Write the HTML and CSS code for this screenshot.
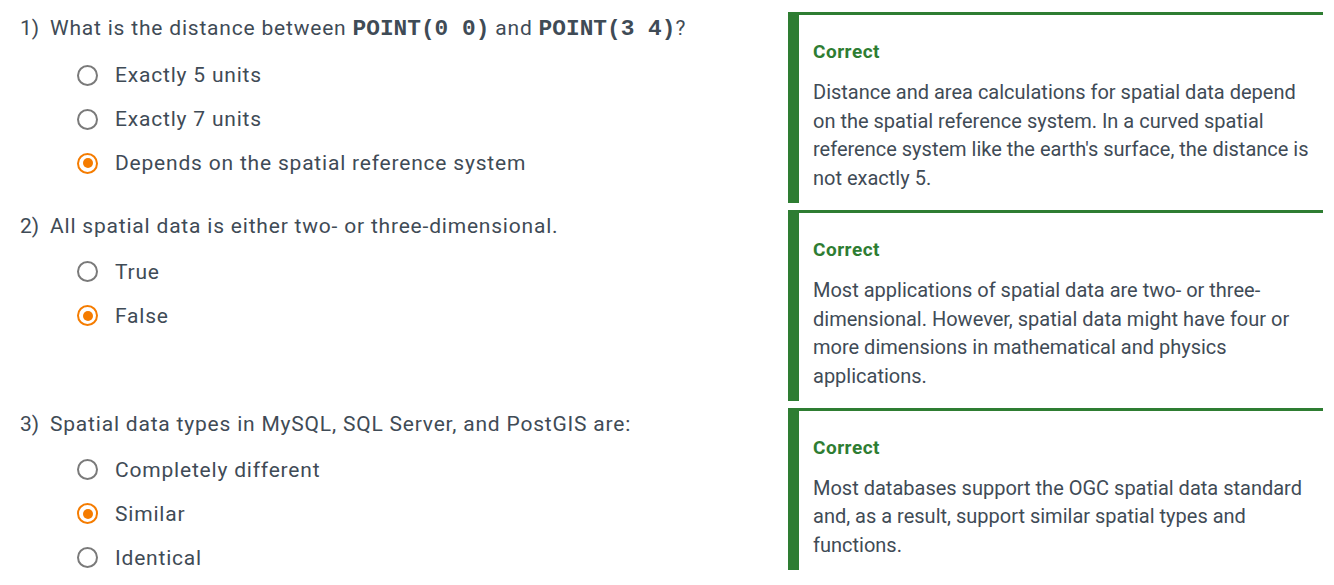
FILE: index.html
```html
<!DOCTYPE html>
<html>
<head>
<meta charset="utf-8">
<link rel="stylesheet" href="styles.css">
</head>
<body>
<div class="quiz">
  <div class="row">
    <div class="question">
      <div class="q-title"><span class="q-num">1)</span><span class="q-text">What is the distance between <code>POINT(0 0)</code> and <code>POINT(3 4)</code>?</span></div>
      <ul class="options">
        <li class="option"><span class="radio"></span>Exactly 5 units</li>
        <li class="option"><span class="radio"></span>Exactly 7 units</li>
        <li class="option"><span class="radio checked"></span>Depends on the spatial reference system</li>
      </ul>
    </div>
    <div class="feedback">
      <div class="fb-title">Correct</div>
      <p class="fb-text">Distance and area calculations for spatial data depend on the spatial reference system. In a curved spatial reference system like the earth's surface, the distance is not exactly 5.</p>
    </div>
  </div>
  <div class="row">
    <div class="question">
      <div class="q-title"><span class="q-num">2)</span><span class="q-text">All spatial data is either two- or three-dimensional.</span></div>
      <ul class="options">
        <li class="option"><span class="radio"></span>True</li>
        <li class="option"><span class="radio checked"></span>False</li>
      </ul>
    </div>
    <div class="feedback">
      <div class="fb-title">Correct</div>
      <p class="fb-text">Most applications of spatial data are two- or three-dimensional. However, spatial data might have four or more dimensions in mathematical and physics applications.</p>
    </div>
  </div>
  <div class="row">
    <div class="question">
      <div class="q-title"><span class="q-num">3)</span><span class="q-text">Spatial data types in MySQL, SQL Server, and PostGIS are:</span></div>
      <ul class="options">
        <li class="option"><span class="radio"></span>Completely different</li>
        <li class="option"><span class="radio checked"></span>Similar</li>
        <li class="option"><span class="radio"></span>Identical</li>
      </ul>
    </div>
    <div class="feedback">
      <div class="fb-title">Correct</div>
      <p class="fb-text">Most databases support the OGC spatial data standard and, as a result, support similar spatial types and functions.</p>
    </div>
  </div>
</div>
</body>
</html>
```

FILE: styles.css
```css
html, body {
  margin: 0;
  padding: 0;
  background: #ffffff;
}
body {
  font-family: Roboto, "Noto Sans", sans-serif;
  color: #3f4b56;
}
.quiz {
  padding: 12px 11px 0 20px;
  display: flex;
  flex-direction: column;
  gap: 7px;
}
.row {
  display: grid;
  grid-template-columns: 1fr 535px;
  align-items: start;
}
.q-title {
  display: flex;
  font-size: 21px;
  line-height: 32px;
  letter-spacing: 0.8px;
}
.q-num {
  width: 30px;
  flex: none;
  letter-spacing: 0;
}
code {
  font-family: "Liberation Mono", "Courier New", monospace;
  font-weight: bold;
  font-size: 22.8px;
  letter-spacing: 0;
  color: #3f4b56;
}
.options {
  list-style: none;
  margin: 0;
  padding: 8px 0 0 57px;
}
.option {
  display: flex;
  align-items: center;
  height: 44px;
  font-size: 21px;
  letter-spacing: 0.8px;
}
.radio {
  box-sizing: border-box;
  width: 21px;
  height: 21px;
  border: 2px solid #7a7a7a;
  border-radius: 50%;
  margin-right: 17px;
  flex: none;
  position: relative;
}
.radio.checked {
  border-color: #f57c00;
}
.radio.checked::after {
  content: "";
  position: absolute;
  left: 3.5px;
  top: 3.5px;
  width: 10px;
  height: 10px;
  border-radius: 50%;
  background: #f57c00;
}
.feedback {
  border-top: 3px solid #2e7d32;
  border-left: 11px solid #2e7d32;
  padding: 23px 8px 10px 14px;
}
.fb-title {
  font-size: 19px;
  line-height: 28px;
  font-weight: bold;
  letter-spacing: 0.5px;
  color: #2e7d32;
}
.fb-text {
  margin: 12px 0 0 0;
  font-size: 20px;
  line-height: 28.7px;
  letter-spacing: 0;
  color: #3f4b56;
}
```
